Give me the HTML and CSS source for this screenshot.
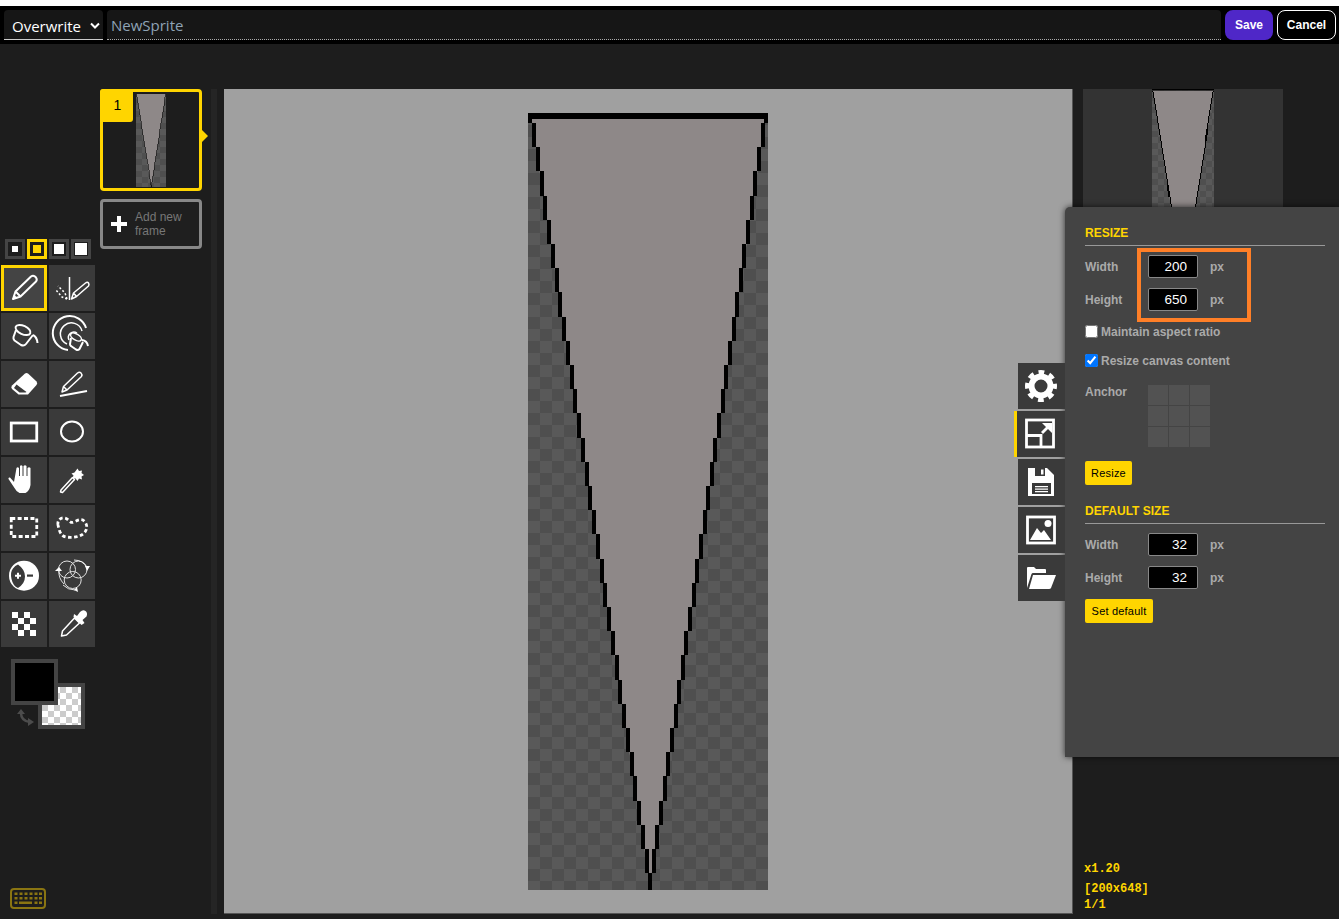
FILE: index.html
```html
<!DOCTYPE html>
<html lang="en">
<head>
    <meta charset="UTF-8">
    <meta name="viewport" content="width=device-width, initial-scale=1.0">
    <title>Sprite Editor</title>
    <link rel="stylesheet" href="styles.css">
</head>
<body>
    <svg class="defs" width="0" height="0">
        <symbol id="art" viewBox="0 0 240 777" preserveAspectRatio="none">
            <path class="art-shape" d="M3.500 6H237.400L122 772z"/>
            <path class="art-line" d="M2 6v4m4 0v24.200
                m4 0v24.200m4 0v24.200m3 0v24.200m4 0v24.200m4 0v24.200m4 0v24.200m3 0v24.200m4 0v24.200
                m4 0v24.200m4 0v24.200m3 0v24.200m4 0v24.200m4 0v24.200m4 0v24.200m3 0v24.200m4 0v24.200
                m4 0v24.200m4 0v24.200m3 0v24.200m4 0v24.200m4 0v24.200m4 0v24.200m3 0v24.200m4 0v24.200
                m4 0v24.200m4 0v24.200m3 0v24.200m4 0v24.200m4 0v24.200m4 0v24.200m3 0v24.200"/>
            <path class="art-line" d="M238 6v4m-3 0v24.200
                m-4 0v24.200m-4 0v24.200m-3 0v24.200m-4 0v24.200m-4 0v24.200m-3 0v24.200m-4 0v24.200
                m-3 0v24.200m-4 0v24.200m-4 0v24.200m-3 0v24.200m-4 0v24.200m-4 0v24.200m-3 0v24.200m-4 0v24.200
                m-3 0v24.200m-4 0v24.200m-4 0v24.200m-3 0v24.200m-4 0v24.200m-4 0v24.200m-3 0v24.200m-4 0v24.200
                m-3 0v24.200m-4 0v24.200m-4 0v24.200m-3 0v24.200m-4 0v24.200m-4 0v24.200m-3 0v24.200m-4 0v24.200"/>
            <rect x="0" y="0" width="240" height="6"/>
        </symbol>
    </svg>

    <div class="topbar">
        <div class="mode-select">
            <span>Overwrite</span>
            <svg width="12" height="8" viewBox="0 0 12 8"><path class="chevron" d="M2 1.500l4 4 4-4"/></svg>
        </div>
        <input class="name-input" type="text" value="NewSprite">
        <button class="btn-save">Save</button>
        <button class="btn-cancel">Cancel</button>
    </div>

    <div class="workspace">
        <div class="tools">
            <div class="pen-sizes">
                <div class="pen-size"><i class="dot-1"></i></div>
                <div class="pen-size active"><i class="dot-2"></i></div>
                <div class="pen-size"><i class="dot-3"></i></div>
                <div class="pen-size"><i class="dot-4"></i></div>
            </div>

            <div class="tool-grid">
                <div class="tool active">
                    <svg viewBox="0 0 46 46"><path class="ln" d="M12 34l2.500-7.500L30 11.500q2-1.500 4 0l1 1q1.500 2 0 4L19.500 31.500zM14.500 26.500l5 5"/><path class="fl" d="M11.500 34.500l1.500-5 3.500 3.500z"/></svg>
                </div>
                <div class="tool">
                    <svg viewBox="0 0 46 46"><path class="ln thin" d="M20.500 12v23M22.500 34l2-6 12-10q2-1.500 3 0t0 3L27.500 31.500zM24.500 28l3 3.500"/><path class="ln thin dash" d="M18 34l-2-6-7-7M18 34l-5-2-6-7"/></svg>
                </div>
                <div class="tool">
                    <svg viewBox="0 0 46 46"><ellipse class="ln" cx="22" cy="17" rx="8" ry="4.200" transform="rotate(25 22 17)"/><path class="ln" d="M15 17l-2.500 7q-.5 2 1 3.500l6.500 4.500q3 1.500 5-1l7-9M32 22q4 2 4.500 8"/></svg>
                </div>
                <div class="tool">
                    <svg viewBox="0 0 46 46"><path class="ln" d="M37 15a17 17 0 1 0-18 22"/><path class="ln thin" d="M33 18a11 11 0 1 0-15 13"/><path class="ln thin" d="M28 20a5.500 5.500 0 0 0-8 7"/><ellipse class="ln thin" cx="27" cy="24" rx="6" ry="3" transform="rotate(30 27 24)"/><path class="ln" d="M22 25l-1 6q0 1.500 1 2l5 3.500q2 1 3.500-.5l3.500-7M33 27q5 .5 6 6"/></svg>
                </div>
                <div class="tool">
                    <svg viewBox="0 0 46 46"><path class="fl" d="M24 12.500q1.500-1 3 0l8.500 8q1.500 1.500 0 3.500l-8.500 9.500H17.500l-6.500-5.500q-1.500-2 0-3.500z"/><path class="cut" d="M15.500 23.500l10 7.500-1 .5h-6l-5.500-4.500z"/></svg>
                </div>
                <div class="tool">
                    <svg viewBox="0 0 46 46"><path class="ln thin" d="M13 31l1.500-5.500 14-13.500q2-1.500 3.500 0t.5 3.500L18 29zM14.500 25.500l3.500 3.500"/><path class="ln" d="M11 35l27-5"/></svg>
                </div>
                <div class="tool">
                    <svg viewBox="0 0 46 46"><rect class="ln thick" x="10.250" y="14" width="25.500" height="18"/></svg>
                </div>
                <div class="tool">
                    <svg viewBox="0 0 46 46"><ellipse class="ln" cx="23" cy="22.500" rx="11" ry="10"/></svg>
                </div>
                <div class="tool">
                    <svg viewBox="0 0 46 46"><path class="fl" d="M15.500 11q1-1.500 2.500 0v8h1V9q1-1.500 2.500 0v10h1V9q1.500-1.500 3 0v10h1V11q1.500-1.500 3 0v17q-1 6-5 8h-6q-3-1-5-5l-6-9q-.5-2 1.500-1.500l4 4.500z"/></svg>
                </div>
                <div class="tool">
                    <svg viewBox="0 0 46 46"><path class="ln thin" d="M12 33l-.5 2 2 .5 12-13-2-2z"/><path class="fl" d="M28.500 11.500l1.500 2.500 3-.5-.5 2.500 2.500 2-2.500 1.500 .5 3-3-1-1.500 2.500-2-2.500-3-.5 1-2.500-2-2 3-1z"/></svg>
                </div>
                <div class="tool">
                    <svg viewBox="0 0 46 46"><rect class="ln thick dash-rect" x="10.250" y="13.500" width="25.500" height="18"/></svg>
                </div>
                <div class="tool">
                    <svg viewBox="0 0 46 46"><path class="ln thick dash-lasso" d="M9 20c-1-5 3-8 7-7s5 6 9 4 8-4 11 0 2 9-2 12-11 4-17 3-7-8-8-12z"/></svg>
                </div>
                <div class="tool">
                    <svg viewBox="0 0 46 46"><circle class="fl" cx="23" cy="22.700" r="15"/><path class="cut" d="M17 11.500q7 5 7 12t-7 11.500q-5-2-6.500-9t1.500-10.500q2-3 5-4z"/><path class="fl" d="M14 21.700h2v-2h2v2h2v2h-2v2h-2v-2h-2z"/><rect class="cut" x="26" y="21.500" width="6" height="2.200"/></svg>
                </div>
                <div class="tool">
                    <svg viewBox="0 0 46 46"><g class="ln hair"><circle cx="18" cy="16.500" r="8.500"/><circle cx="29.500" cy="16.500" r="8.500"/><circle cx="23.700" cy="27" r="8.500"/></g><path class="ln hair" d="M10 17q-1 8 5 14M25 7q9 0 13 8M26 37q-7 0-12-5"/><path class="fl" d="M6 18l4-4 3 4zM41 13l-5 0 2 5zM28 34l-3 3 4 2z"/></svg>
                </div>
                <div class="tool">
                    <svg viewBox="0 0 46 46"><path class="fl" d="M11 11h6v6h-6zM23 11h6v6h-6zM17 17h6v6h-6zM29 17h6v6h-6zM11 23h6v6h-6zM23 23h6v6h-6zM17 29h6v6h-6zM29 29h6v6h-6z"/></svg>
                </div>
                <div class="tool">
                    <svg viewBox="0 0 46 46"><path class="ln thin" d="M12.500 35l1-5 12-13 5 5-13 12z"/><path class="fl" d="M25 13l3 2 3-4q3-3 5.500-1t1 5.500l-4 3.500 2 3-3 2-8-8z"/></svg>
                </div>
            </div>

            <div class="color-stack">
                <div class="swatch swatch-back"></div>
                <div class="swatch swatch-front"></div>
                <svg class="swap-icon" viewBox="0 0 18 18"><path class="swap-line" d="M5 5q0 8 9 9"/><path class="swap-head" d="M1 6l4-5 4 5zM12 10l6 4-6 4z"/></svg>
            </div>

            <svg class="keyboard" viewBox="0 0 36 21"><rect class="kb-frame" x="1" y="1" width="34" height="19" rx="3"/><path class="kb-keys" d="M4.500 4.500h3v2.500h-3zM9.500 4.500h3v2.500h-3zM14.500 4.500h3v2.500h-3zM19.500 4.500h3v2.500h-3zM24.500 4.500h3v2.500h-3zM29 4.500h3v2.500h-3zM4.500 9h3v2.500h-3zM9.500 9h3v2.500h-3zM14.500 9h3v2.500h-3zM19.500 9h3v2.500h-3zM24.500 9h3v2.500h-3zM29 9h3v2.500h-3zM4.500 13.500h3V16h-3zM9 13.500h13V16H9zM24.500 13.500h3V16h-3zM29 13.500h3V16h-3z"/></svg>
        </div>

        <div class="frames">
            <div class="frame-card">
                <div class="frame-num">1</div>
                <div class="sprite sprite-thumb"><svg class="art"><use href="#art"/></svg></div>
            </div>
            <div class="add-frame">
                <svg width="16" height="16" viewBox="0 0 16 16"><path class="fl" d="M6 0h4v6h6v4h-6v6H6v-6H0V6h6z"/></svg>
                <span>Add new<br>frame</span>
            </div>
        </div>

        <div class="handle"></div>

        <div class="canvas">
            <div class="sprite sprite-main"><svg class="art"><use href="#art"/></svg></div>
        </div>

        <div class="side">
            <div class="preview">
                <div class="sprite sprite-preview"><svg class="art"><use href="#art"/></svg></div>
            </div>
            <div class="info">
                <div class="zoom-level">x1.20</div>
                <div>[200x648]</div>
                <div>1/1</div>
            </div>
        </div>
    </div>

    <div class="drawer">
        <div class="drawer-tabs">
            <div class="drawer-tab">
                <svg viewBox="0 0 47 46"><circle class="gear-teeth" cx="23" cy="23" r="13.500"/><circle class="gear-ring" cx="23" cy="23" r="9.500"/></svg>
            </div>
            <div class="drawer-tab active">
                <svg viewBox="0 0 47 46"><rect class="ln thick" x="8.500" y="9" width="27" height="27"/><path class="ln thick" d="M8.500 24.500h14.500V36"/><path class="ln thick" d="M24 22l7-7"/><path class="fl" d="M24 12h10v10l-3.500-3.500-3-3z"/></svg>
            </div>
            <div class="drawer-tab">
                <svg viewBox="0 0 47 46"><path class="fl" d="M10 9h19l7 7v21H10z"/><path class="cut" d="M17 9h10v8H17zM14 24h19v11H14z"/><path class="fl" d="M23 10.500h2.500v5H23zM17 27h13v1.200H17zM17 29.500h13v1.200H17zM17 32h13v1.200H17z"/></svg>
            </div>
            <div class="drawer-tab">
                <svg viewBox="0 0 47 46"><rect class="ln thick" x="9.500" y="10" width="27" height="26"/><circle class="fl" cx="30" cy="16.500" r="3.500"/><path class="fl" d="M12 33l7-12 4 5 3-3 7 10z"/></svg>
            </div>
            <div class="drawer-tab">
                <svg viewBox="0 0 47 46"><path class="fl" d="M9 33V13q0-1 1-1h6l2 2h9q1 0 1 1v3H15q-1 0-1.500 1z"/><path class="fl" d="M15 20h23l-5 13q-.5 1-2 1H11z"/></svg>
            </div>
        </div>

        <div class="section-title">RESIZE</div>
        <div class="field-row">
            <label>Width</label>
            <input class="num-input" type="text" value="200">
            <span class="unit">px</span>
        </div>
        <div class="field-row">
            <label>Height</label>
            <input class="num-input" type="text" value="650">
            <span class="unit">px</span>
        </div>
        <div class="check-row first">
            <input type="checkbox" id="aspect">
            <label for="aspect">Maintain aspect ratio</label>
        </div>
        <div class="check-row">
            <input type="checkbox" id="content" checked>
            <label for="content">Resize canvas content</label>
        </div>
        <div class="anchor-row">
            <label>Anchor</label>
            <div class="anchor-grid">
                <i></i><i></i><i></i>
                <i></i><i></i><i></i>
                <i></i><i></i><i></i>
            </div>
        </div>
        <button class="btn-yellow btn-resize">Resize</button>

        <div class="section-title second">DEFAULT SIZE</div>
        <div class="field-row">
            <label>Width</label>
            <input class="num-input" type="text" value="32">
            <span class="unit">px</span>
        </div>
        <div class="field-row">
            <label>Height</label>
            <input class="num-input" type="text" value="32">
            <span class="unit">px</span>
        </div>
        <button class="btn-yellow btn-default">Set default</button>

        <div class="highlight"></div>
    </div>
</body>
</html>
```

FILE: styles.css
```css
* {
    box-sizing: border-box;
}

body {
    margin: 0;
    width: 1339px;
    height: 919px;
    overflow: hidden;
    position: relative;
    background: #1d1d1d;
    border-top: 6px solid #fff;
    font-family: "Liberation Sans", Arial, sans-serif;
}

.defs {
    position: absolute;
}

.art-shape {
    fill: #8e8888;
}

.art-line {
    fill: none;
    stroke: #000;
    stroke-width: 4.500;
    shape-rendering: crispEdges;
}

/* top bar */
.topbar {
    display: flex;
    align-items: center;
    height: 38px;
    padding: 0 3px 0 4px;
    background: #000;
}

.mode-select {
    display: flex;
    align-items: center;
    justify-content: space-between;
    width: 99px;
    height: 30px;
    padding: 2px 2px 0 8px;
    background: #161616;
    border-radius: 4px 4px 0 0;
    border-bottom: 1px solid #ccc;
    color: #fff;
    font-family: "Open Sans", sans-serif;
    font-size: 15px;
}

.chevron {
    fill: none;
    stroke: #fff;
    stroke-width: 2;
}

.name-input {
    flex: 1;
    height: 30px;
    margin: 0 4px;
    padding: 0 4px;
    background: #161616;
    border: 0;
    border-radius: 4px 4px 0 0;
    border-bottom: 1px dotted #aaa;
    color: #8fa3b5;
    font-family: "Open Sans", sans-serif;
    font-size: 15px;
}

.btn-save,
.btn-cancel {
    height: 30px;
    border-radius: 8px;
    color: #fff;
    font-family: "Liberation Sans", Arial, sans-serif;
    font-size: 12px;
    font-weight: bold;
    padding: 0;
}

.btn-save {
    width: 48px;
    background: #4f27c8;
    border: 0;
}

.btn-cancel {
    width: 59px;
    margin-left: 4px;
    background: #000;
    border: 1px solid #fff;
}

.workspace {
    display: flex;
    height: 875px;
    padding-top: 45px;
}

/* left tools */
.tools {
    display: flex;
    flex-direction: column;
    width: 100px;
    height: 830px;
    padding: 150px 0 10px 1px;
}

.pen-sizes {
    display: flex;
    gap: 2px;
    margin-left: 4px;
}

.pen-size {
    display: flex;
    align-items: center;
    justify-content: center;
    width: 20px;
    height: 20px;
    border: 3px solid #444;
    background: #1d1d1d;
}

.pen-size.active {
    border-color: #ffd500;
}

.pen-size i {
    display: block;
    flex: none;
    background: #fff;
}

.pen-size.active i {
    background: #ffd500;
}

.dot-1 { width: 6px; height: 6px; }
.dot-2 { width: 8px; height: 8px; }
.dot-3 { width: 10px; height: 10px; }
.dot-4 { width: 12px; height: 12px; }

.tool-grid {
    display: grid;
    grid-template-columns: 46px 46px;
    grid-auto-rows: 46px;
    gap: 2px;
    margin-top: 6px;
}

.tool {
    background: #3a3a3a;
}

.tool.active {
    background: #444;
    outline: 3px solid #ffd500;
    outline-offset: -3px;
}

.tool svg,
.drawer-tab svg {
    display: block;
    width: 100%;
    height: 100%;
}

.ln {
    fill: none;
    stroke: #fff;
    stroke-width: 2;
    stroke-linejoin: round;
}

.ln.thin { stroke-width: 1.500; }
.ln.hair { stroke-width: 1; opacity: 0.85; }
.ln.thick { stroke-width: 2.800; stroke-linejoin: miter; }
.ln.dash { stroke-dasharray: 2 2; }
.ln.dash-rect { stroke-dasharray: 4 2.400; }
.ln.dash-lasso { stroke-dasharray: 3.500 2.500; }

.fl {
    fill: #fff;
}

.cut {
    fill: #3a3a3a;
}

.color-stack {
    position: relative;
    width: 85px;
    height: 70px;
    margin-top: 12px;
}

.swatch {
    position: absolute;
    width: 47px;
    height: 46px;
    border: 4px solid #444;
}

.swatch-front {
    left: 10px;
    top: 0;
    background: #000;
}

.swatch-back {
    left: 37px;
    top: 24px;
    background: repeating-conic-gradient(#ccc 0 25%, #fff 0 50%) 0 0 / 12px 12px;
}

.swap-icon {
    position: absolute;
    left: 15px;
    top: 49px;
    width: 18px;
    height: 18px;
}

.swap-line {
    fill: none;
    stroke: #4c4c4c;
    stroke-width: 2.500;
}

.swap-head {
    fill: #4c4c4c;
}

.keyboard {
    width: 36px;
    height: 21px;
    margin: auto 0 0 9px;
}

.kb-frame {
    fill: none;
    stroke: #8a7512;
    stroke-width: 2;
}

.kb-keys {
    fill: #8a7512;
}

/* frames */
.frames {
    width: 102px;
}

.frame-card {
    position: relative;
    display: flex;
    justify-content: center;
    width: 102px;
    height: 102px;
    padding-top: 1px;
    border: 3px solid #ffd500;
    border-radius: 4px;
}

.frame-card::after {
    content: "";
    position: absolute;
    right: -9px;
    top: 38px;
    border: 6px solid transparent;
    border-left-color: #ffd500;
    border-right-width: 0;
}

.frame-num {
    position: absolute;
    left: -3px;
    top: -3px;
    width: 33px;
    height: 33px;
    padding-left: 2px;
    background: #ffd500;
    border-radius: 3px 0 3px 0;
    color: #000;
    font-size: 14px;
    line-height: 33px;
    text-align: center;
}

.add-frame {
    display: flex;
    align-items: center;
    gap: 8px;
    width: 102px;
    height: 50px;
    margin-top: 8px;
    padding-left: 8px;
    background: #1f1f1f;
    border: 3px solid #888;
    border-radius: 4px;
    color: #777;
    font-size: 12px;
    line-height: 14px;
}

.sprite {
    background: repeating-conic-gradient(#4f4f4f 0 25%, #595959 0 50%);
}

.art {
    display: block;
    width: 100%;
    height: 100%;
}

.sprite-thumb {
    width: 30px;
    height: 94px;
    background-size: 12px 12px;
}

.sprite-main {
    width: 240px;
    height: 777px;
    background-size: 24px 24px;
}

.sprite-preview {
    width: 62px;
    height: 200px;
    margin-left: 69px;
    background-size: 12px 12px;
}

.handle {
    width: 6px;
    height: 825px;
    margin: 0 7px 0 9px;
    background: #252525;
}

/* canvas */
.canvas {
    display: flex;
    justify-content: center;
    width: 849px;
    height: 825px;
    padding-top: 24px;
    background: #a0a0a0;
    border-right: 1px solid #555;
    border-bottom: 1px solid #555;
}

/* right side */
.side {
    display: flex;
    flex-direction: column;
    width: 200px;
    height: 830px;
    margin-left: 10px;
}

.preview {
    height: 200px;
    background: #333;
}

.info {
    margin-top: auto;
    padding: 0 0 6px 1px;
    color: #ffd500;
    font-family: "Liberation Mono", monospace;
    font-size: 12px;
    font-weight: bold;
    line-height: 16px;
}

.zoom-level {
    margin-bottom: 4px;
}

/* settings drawer */
.drawer {
    position: absolute;
    left: 1065px;
    top: 201px;
    width: 274px;
    height: 550px;
    padding: 17px 14px 0 20px;
    background: #444;
    border-radius: 5px 0 0 0;
    box-shadow: 0 0 6px rgba(0, 0, 0, 0.7);
    color: #aaa;
    font-size: 12px;
    font-weight: bold;
}

.drawer-tabs {
    position: absolute;
    right: 100%;
    top: 156px;
    display: flex;
    flex-direction: column;
    align-items: flex-end;
    gap: 2px;
}

.drawer-tab {
    width: 47px;
    height: 46px;
    background: #3a3a3a;
}

.drawer-tab.active {
    width: 51px;
    padding-left: 1px;
    border-left: 3px solid #ffd500;
}

.gear-teeth {
    fill: none;
    stroke: #fff;
    stroke-width: 5;
    stroke-dasharray: 5.600 5;
    stroke-dashoffset: 2.800;
}

.gear-ring {
    fill: none;
    stroke: #fff;
    stroke-width: 6;
}

.section-title {
    height: 22px;
    margin-bottom: -1px;
    padding-top: 2px;
    border-bottom: 1px solid #999;
    color: #ffd500;
    font-size: 12px;
    line-height: 15px;
}

.section-title.second {
    margin-top: 17px;
}

.field-row {
    display: flex;
    align-items: center;
    height: 23px;
    margin: 10px 0;
}

.field-row label {
    width: 63px;
}

.num-input {
    width: 50px;
    height: 23px;
    padding: 0 10px 0 0;
    background: #000;
    border: 1px solid #888;
    border-radius: 2px;
    color: #fff;
    font-family: "Liberation Sans", Arial, sans-serif;
    font-size: 13.500px;
    text-align: right;
}

.unit {
    margin-left: 12px;
}

.check-row {
    display: flex;
    align-items: center;
    height: 13px;
    margin-top: 16px;
}

.check-row.first {
    margin-top: 14px;
}

.check-row input {
    width: 13px;
    height: 13px;
    margin: 0 3px 0 0;
}

.anchor-row {
    display: flex;
    margin-top: 18px;
}

.anchor-row label {
    width: 63px;
}

.anchor-grid {
    display: grid;
    grid-template-columns: repeat(3, 20px);
    grid-auto-rows: 20px;
    gap: 1px;
}

.anchor-grid i {
    background: #525252;
}

.btn-yellow {
    display: block;
    height: 24px;
    padding: 0;
    background: #ffd500;
    border: 0;
    border-radius: 2px;
    color: #000;
    font-family: "Liberation Sans", Arial, sans-serif;
    font-size: 11px;
    letter-spacing: 0.2px;
}

.btn-resize {
    width: 47px;
    margin-top: 14px;
}

.btn-default {
    width: 68px;
}

.highlight {
    position: absolute;
    left: 72px;
    top: 41px;
    width: 114px;
    height: 74px;
    border: 4px solid #ff7f27;
}
```
